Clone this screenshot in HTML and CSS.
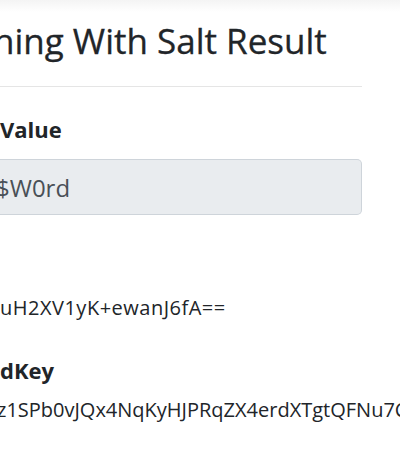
FILE: index.html
```html
<!DOCTYPE html>
<html lang="en">
<head>
  <meta charset="UTF-8">
  <meta name="viewport" content="width=device-width, initial-scale=1">
  <title>Hashing With Salt Result</title>
  <link rel="stylesheet" href="styles.css">
</head>
<body>
  <div class="nav-shadow"></div>
  <div class="container">
    <h2 class="title">hing With Salt Result</h2>
    <hr>
    <div class="field">
      <label class="field-label">Value</label>
      <input type="text" class="form-control" value="$W0rd" readonly>
    </div>
    <div class="field salt">
      <div class="field-value">uH2XV1yK+ewanJ6fA==</div>
    </div>
    <div class="field hashed">
      <label class="field-label">dKey</label>
      <div class="field-value key">z1SPb0vJQx4NqKyHJPRqZX4erdXTgtQFNu7C</div>
    </div>
  </div>
</body>
</html>
```

FILE: styles.css
```css
html, body {
  margin: 0;
  padding: 0;
  overflow: hidden;
  background-color: #fff;
  color: #212529;
  font-family: "Open Sans", "Noto Sans", sans-serif;
}
/* bottom edge of the fixed navbar shadow */
.nav-shadow {
  height: 12px;
  background: linear-gradient(#f4f4f4, #fff);
}
.container {
  width: 362px;
}
.title {
  margin: 7px 0 0;
  font-size: 35px;
  font-weight: 400;
  line-height: 44px;
  text-indent: -7px;
  white-space: nowrap;
  -webkit-text-stroke: 0.3px #212529;
}
hr {
  margin: 23px 0 0;
  border: 0;
  border-top: 1px solid rgba(0, 0, 0, 0.1);
}
.field {
  display: flex;
  flex-direction: column;
}
.field-label {
  display: block;
  margin-top: 28px;
  font-size: 22px;
  font-weight: 700;
  line-height: 28px;
}
.form-control {
  margin-top: 16px;
  height: 56px;
  box-sizing: border-box;
  padding: 9px 16px 9px 0;
  text-indent: -4px;
  font-family: inherit;
  font-size: 24px;
  line-height: 36px;
  color: #495057;
  background-color: #e9ecef;
  border: 1px solid #ced4da;
  border-left: 0;
  border-radius: 0 5px 5px 0;
}
.field-value {
  font-size: 20px;
  line-height: 30px;
  white-space: nowrap;
}
.salt .field-value {
  margin-top: 78px;
  letter-spacing: 0.5px;
}
.hashed .field-label {
  margin-top: 33px;
}
.field-label + .key {
  margin-top: 11px;
  text-indent: -3px;
}
```
